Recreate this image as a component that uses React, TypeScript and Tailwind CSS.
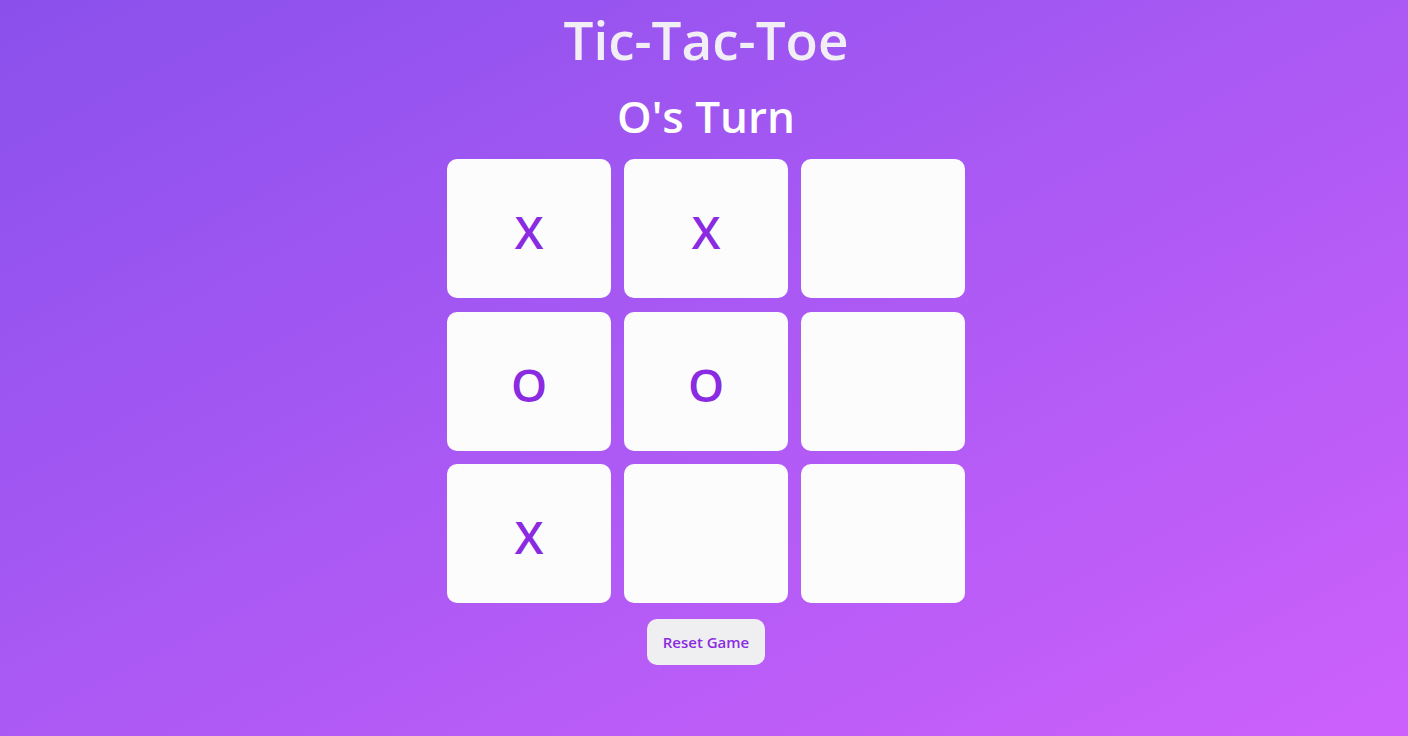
import React, { useState } from 'react';

type Cell = 'X' | 'O' | null;

export default function App() {
  const [board, setBoard] = useState<Cell[]>(['X', 'X', null, 'O', 'O', null, 'X', null, null]);
  const [turn, setTurn] = useState<'X' | 'O'>('O');

  const play = (i: number) => {
    if (board[i]) return;
    const next = [...board];
    next[i] = turn;
    setBoard(next);
    setTurn(turn === 'X' ? 'O' : 'X');
  };

  const reset = () => {
    setBoard(Array(9).fill(null));
    setTurn('X');
  };

  return (
    <div
      className="min-h-screen w-full bg-linear-to-br from-[#8a50ec] to-[#cd60fc] flex flex-col items-center pl-[4px]"
      style={{ fontFamily: '"Open Sans", "Noto Sans", sans-serif' }}
    >
      <h1 className="mt-[4px] text-[53px] leading-[72px] font-semibold text-[#f1eef6]">Tic-Tac-Toe</h1>
      <h2 className="mt-[10px] text-[44px] leading-[60px] font-semibold text-white">{turn}'s Turn</h2>
      <div className="mt-[13px] grid grid-cols-3 gap-x-[13px] gap-y-[13.5px]">
        {board.map((cell, i) => (
          <button
            key={i}
            onClick={() => play(i)}
            className="w-[164px] h-[139px] rounded-[10px] bg-[#fcfcfc] flex items-center justify-center pt-[6px] text-[46px] font-semibold text-[#8a2be2]"
          >
            {cell}
          </button>
        ))}
      </div>
      <button
        onClick={reset}
        className="mt-[16px] w-[118px] h-[46px] rounded-[10px] bg-[#efeff1] text-[15px] font-semibold text-[#8a2be2]"
      >
        Reset Game
      </button>
    </div>
  );
}
